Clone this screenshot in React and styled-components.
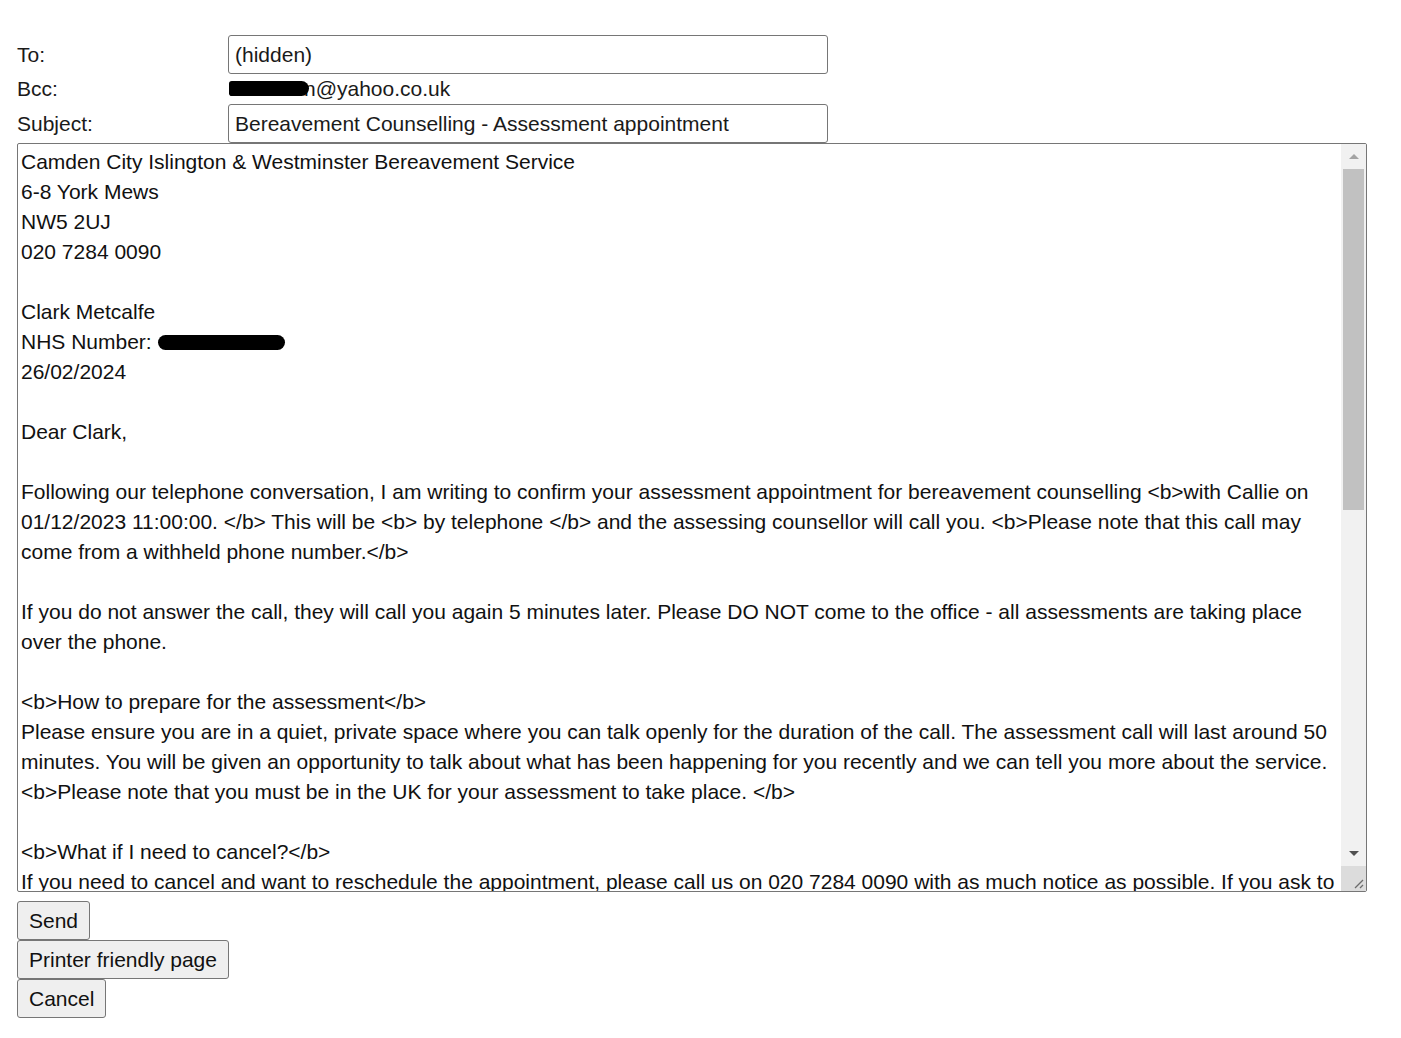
import React from 'react';
import styled, { createGlobalStyle } from 'styled-components';

const Global = createGlobalStyle`
  html, body { margin: 0; padding: 0; background: #fff; }
  body { font-family: "Liberation Sans", Arial, sans-serif; color: #000; }
`;

const Page = styled.div`
  padding: 35px 0 0 17px;
  width: 1350px;
`;

const Header = styled.div`
  display: grid;
  grid-template-columns: 211px 600px;
  grid-template-rows: 39px 30px 39px;
  align-items: center;
`;

const Label = styled.div`
  font-size: 21px;
  color: #1a1a1a;
`;

const Field = styled.input`
  box-sizing: border-box;
  height: 39px;
  width: 600px;
  margin: 0;
  border: 1px solid #767676;
  border-radius: 3px;
  padding: 0 6px;
  font: 21px "Liberation Sans", Arial, sans-serif;
  color: #1a1a1a;
  background: #fff;
  outline: none;
`;

const BccValue = styled.div`
  font-size: 21px;
  color: #1a1a1a;
  display: flex;
  align-items: center;
  padding-left: 1px;
`;

const Redact = styled.span`
  position: relative;
  z-index: 1;
  display: inline-block;
  width: ${(p) => p.$w}px;
  height: ${(p) => p.$h}px;
  margin-right: ${(p) => p.$overlap || 0}px;
  background: #000;
  border-radius: ${(p) => (p.$square ? `3px ${Math.round(p.$h / 2)}px ${Math.round(p.$h / 2)}px 3px` : `${Math.round(p.$h / 2)}px`)};
  vertical-align: middle;
  margin-top: -2px;
`;

const Body = styled.div`
  display: flex;
  box-sizing: border-box;
  height: 749px;
  border: 1px solid #767676;
  border-radius: 2px;
  overflow: hidden;
`;

const BodyText = styled.div`
  flex: 1;
  min-width: 0;
  padding: 3px 0 0 3px;
  font-size: 21px;
  line-height: 30px;
  white-space: pre-wrap;
  overflow: hidden;
  color: #111;
`;

const Scrollbar = styled.div`
  width: 25px;
  flex: none;
  display: flex;
  flex-direction: column;
  background: #f1f1f1;
`;

const ArrowButton = styled.div`
  height: 25px;
  flex: none;
  display: flex;
  align-items: center;
  justify-content: center;
`;

const Arrow = styled.span`
  width: 0;
  height: 0;
  border-left: 5px solid transparent;
  border-right: 5px solid transparent;
  ${(p) =>
    p.$dir === 'up'
      ? 'border-bottom: 5px solid #a3a3a3;'
      : 'border-top: 5px solid #505050;'}
`;

const Thumb = styled.div`
  height: 341px;
  flex: none;
  margin: 0 2px;
  background: #c1c1c1;
`;

const Track = styled.div`
  flex: 1;
`;

const Corner = styled.div`
  height: 25px;
  flex: none;
  background: #dcdcdc;
  display: flex;
  align-items: flex-end;
  justify-content: flex-end;
`;

const Buttons = styled.div`
  margin-top: 9px;
  display: flex;
  flex-direction: column;
  align-items: flex-start;
`;

const Button = styled.button`
  box-sizing: border-box;
  height: 39px;
  margin: 0;
  padding: 0 11px;
  font: 21px "Liberation Sans", Arial, sans-serif;
  color: #111;
  background: #efefef;
  border: 1px solid #767676;
  border-radius: 3px;
`;

const text1 = `Camden City Islington & Westminster Bereavement Service
6-8 York Mews
NW5 2UJ
020 7284 0090

Clark Metcalfe
NHS Number: `;

const text2 = `
26/02/2024

Dear Clark,

Following our telephone conversation, I am writing to confirm your assessment appointment for bereavement counselling <b>with Callie on 01/12/2023 11:00:00. </b> This will be <b> by telephone </b> and the assessing counsellor will call you. <b>Please note that this call may come from a withheld phone number.</b>

If you do not answer the call, they will call you again 5 minutes later. Please DO NOT come to the office - all assessments are taking place over the phone.

<b>How to prepare for the assessment</b>
Please ensure you are in a quiet, private space where you can talk openly for the duration of the call. The assessment call will last around 50 minutes. You will be given an opportunity to talk about what has been happening for you recently and we can tell you more about the service.
<b>Please note that you must be in the UK for your assessment to take place. </b>

<b>What if I need to cancel?</b>
If you need to cancel and want to reschedule the appointment, please call us on 020 7284 0090 with as much notice as possible. If you ask to cancel less than 24 hours before your appointment, we may not be able to offer you another one.

Kind regards,
Bereavement Service`;

export default function App() {
  return (
    <>
      <Global />
      <Page>
        <Header>
          <Label>To:</Label>
          <Field defaultValue="(hidden)" readOnly />
          <Label>Bcc:</Label>
          <BccValue>
            <Redact $w={80} $h={15} $overlap={-5} $square />
            <span>n@yahoo.co.uk</span>
          </BccValue>
          <Label>Subject:</Label>
          <Field defaultValue="Bereavement Counselling - Assessment appointment" readOnly />
        </Header>
        <Body>
          <BodyText>
            {text1}
            <Redact $w={127} $h={15} />
            {text2}
          </BodyText>
          <Scrollbar>
            <ArrowButton>
              <Arrow $dir="up" />
            </ArrowButton>
            <Thumb />
            <Track />
            <ArrowButton>
              <Arrow $dir="down" />
            </ArrowButton>
            <Corner>
              <svg width="25" height="25" viewBox="0 0 25 25">
                <line x1="22" y1="14" x2="14" y2="22" stroke="#6b6b6b" strokeWidth="1.2" />
                <line x1="22" y1="19" x2="19" y2="22" stroke="#6b6b6b" strokeWidth="1.2" />
              </svg>
            </Corner>
          </Scrollbar>
        </Body>
        <Buttons>
          <Button>Send</Button>
          <Button>Printer friendly page</Button>
          <Button>Cancel</Button>
        </Buttons>
      </Page>
    </>
  );
}
